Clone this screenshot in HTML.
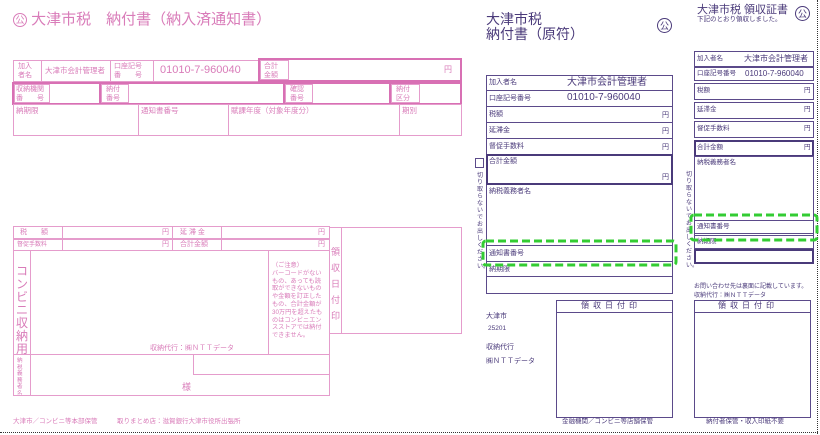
<!DOCTYPE html><html><head><meta charset="utf-8"><style>
*{margin:0;padding:0;box-sizing:border-box}
body{width:820px;height:435px;background:#fff;position:relative;overflow:hidden;font-family:"Liberation Sans","Noto Sans CJK JP",sans-serif}
.a{position:absolute}
.p{border:1px solid #e59ccc}
.pt{color:#d97cb9}
.P{border:2px solid #d870b4}
.u{border:1px solid #5b4a8a}
.U{border:2px solid #4a3a7a}
.ut{color:#4a3a7a}
.t{position:absolute;white-space:nowrap;line-height:1}
</style></head><body>
<div class="a" style="left:0;top:432px;width:818px;border-top:1px dotted #333"></div>
<div class="a" style="left:817px;top:0;height:434px;border-left:1px dotted #333"></div>

<!-- LEFT pink -->
<div class="t pt" style="left:13px;top:12px;font-size:15px"><span style="display:inline-block;width:14px;height:14px;border:1px solid #d97cb9;border-radius:50%;font-size:9px;text-align:center;line-height:13px;vertical-align:1px">公</span> 大津市税　納付書（納入済通知書）</div>
<div class="a p" style="left:13px;top:60px;width:246px;height:22px"></div>
<div class="a p" style="left:41px;top:60px;width:70px;height:22px"></div>
<div class="a p" style="left:110px;top:60px;width:44px;height:22px"></div>
<div class="t pt" style="left:18px;top:62px;font-size:7px;line-height:9px">加入<br>者名</div>
<div class="t pt" style="left:45px;top:67px;font-size:7.5px">大津市会計管理者</div>
<div class="t pt" style="left:114px;top:62px;font-size:7px;line-height:9px">口座記号<br>番　　号</div>
<div class="t pt" style="left:160px;top:65px;font-size:11px">01010-7-960040</div>
<div class="a P" style="left:258px;top:58px;width:204px;height:24px"></div>
<div class="a p" style="left:260px;top:60px;width:29px;height:20px"></div>
<div class="t pt" style="left:264px;top:62px;font-size:7px;line-height:9px">合計<br>金額</div>
<div class="t pt" style="left:444px;top:66px;font-size:8px">円</div>
<div class="a P" style="left:12px;top:82px;width:89px;height:23px"></div>
<div class="a p" style="left:14px;top:84px;width:36px;height:19px"></div>
<div class="t pt" style="left:16px;top:85px;font-size:7px;line-height:9px">収納機関<br>番　　号</div>
<div class="a P" style="left:99px;top:82px;width:186px;height:23px"></div>
<div class="a p" style="left:101px;top:84px;width:28px;height:19px"></div>
<div class="t pt" style="left:106px;top:85px;font-size:7px;line-height:9px">納付<br>番号</div>
<div class="a P" style="left:283px;top:82px;width:108px;height:23px"></div>
<div class="a p" style="left:285px;top:84px;width:28px;height:19px"></div>
<div class="t pt" style="left:290px;top:85px;font-size:7px;line-height:9px">確認<br>番号</div>
<div class="a P" style="left:389px;top:82px;width:73px;height:23px"></div>
<div class="a p" style="left:391px;top:84px;width:29px;height:19px"></div>
<div class="t pt" style="left:396px;top:85px;font-size:7px;line-height:9px">納付<br>区分</div>
<div class="a p" style="left:13px;top:104px;width:449px;height:32px"></div>
<div class="a p" style="left:138px;top:104px;width:91px;height:32px"></div>
<div class="a p" style="left:399px;top:104px;width:63px;height:32px"></div>
<div class="t pt" style="left:16px;top:107px;font-size:7.5px">納期限</div>
<div class="t pt" style="left:141px;top:107px;font-size:7.5px">通知書番号</div>
<div class="t pt" style="left:231px;top:107px;font-size:7.5px">賦課年度（対象年度分）</div>
<div class="t pt" style="left:402px;top:107px;font-size:7.5px">期別</div>

<div class="a p" style="left:13px;top:226px;width:317px;height:170px"></div>
<div class="a p" style="left:13px;top:226px;width:317px;height:13px"></div>
<div class="a p" style="left:13px;top:239px;width:317px;height:12px"></div>
<div class="a p" style="left:62px;top:226px;width:111px;height:25px"></div>
<div class="a p" style="left:221px;top:226px;width:109px;height:25px"></div>
<div class="t pt" style="left:20px;top:229px;font-size:7px">税　　額</div>
<div class="t pt" style="left:17px;top:242px;font-size:6px">督促手数料</div>
<div class="t pt" style="left:162px;top:229px;font-size:7px">円</div>
<div class="t pt" style="left:162px;top:241px;font-size:7px">円</div>
<div class="t pt" style="left:180px;top:229px;font-size:7px">延 滞 金</div>
<div class="t pt" style="left:180px;top:241px;font-size:7px">合計金額</div>
<div class="t pt" style="left:318px;top:229px;font-size:7px">円</div>
<div class="t pt" style="left:318px;top:241px;font-size:7px">円</div>
<div class="a p" style="left:13px;top:250px;width:18px;height:146px"></div>
<div class="t pt" style="left:16px;top:265px;font-size:12px;line-height:13px;white-space:normal;width:13px">コンビニ収納用</div>
<div class="t pt" style="left:17px;top:358px;font-size:5.5px;line-height:6.5px;white-space:normal;width:6px">納税義務者名</div>
<div class="a p" style="left:13px;top:354px;width:317px;height:42px"></div>
<div class="a p" style="left:268px;top:250px;width:62px;height:105px"></div>
<div class="t pt" style="left:272px;top:262px;font-size:6.2px;line-height:7.8px">（ご注意）<br>バーコードがない<br>もの、あっても読<br>取ができないもの<br>や金額を訂正した<br>もの、合計金額が<br>30万円を超えたも<br>のはコンビニエン<br>スストアでは納付<br>できません。</div>
<div class="t pt" style="left:150px;top:345px;font-size:7px">収納代行：㈱ＮＴＴデータ</div>
<div class="a p" style="left:193px;top:354px;width:137px;height:21px"></div>
<div class="t pt" style="left:182px;top:383px;font-size:9px">様</div>
<div class="a p" style="left:329px;top:227px;width:133px;height:107px"></div>
<div class="a p" style="left:341px;top:227px;width:121px;height:107px"></div>
<div class="t pt" style="left:331px;top:244px;font-size:9px;line-height:16px;white-space:normal;width:9px">領収日付印</div>
<div class="t pt" style="left:13px;top:419px;font-size:6.5px">大津市／コンビニ等本部保管　　　取りまとめ店：滋賀銀行大津市役所出張所</div>

<!-- MIDDLE purple -->
<div class="t ut" style="left:486px;top:12px;font-size:14px;line-height:15px">大津市税<br>納付書（原符）</div>
<div class="t ut" style="left:657px;top:18px;width:15px;height:15px;border:1px solid #4a3a7a;border-radius:50%;font-size:9px;text-align:center;line-height:14px">公</div>
<div class="a u" style="left:486px;top:75px;width:187px;height:219px"></div>
<div class="a u" style="left:486px;top:75px;width:187px;height:16px"></div>
<div class="a u" style="left:486px;top:90px;width:187px;height:17px"></div>
<div class="a u" style="left:486px;top:106px;width:187px;height:17px"></div>
<div class="a u" style="left:486px;top:122px;width:187px;height:17px"></div>
<div class="a u" style="left:486px;top:138px;width:187px;height:17px"></div>
<div class="a U" style="left:486px;top:154px;width:187px;height:31px"></div>
<div class="a u" style="left:486px;top:245px;width:187px;height:17px"></div>
<div class="a u" style="left:486px;top:276px;width:187px;height:18px"></div>
<div class="t ut" style="left:489px;top:79px;font-size:7px">加入者名</div>
<div class="t ut" style="left:567px;top:78px;font-size:10px">大津市会計管理者</div>
<div class="t ut" style="left:489px;top:95px;font-size:7px">口座記号番号</div>
<div class="t ut" style="left:567px;top:93px;font-size:10px">01010-7-960040</div>
<div class="t ut" style="left:489px;top:111px;font-size:7px">税額</div>
<div class="t ut" style="left:489px;top:127px;font-size:7px">延滞金</div>
<div class="t ut" style="left:489px;top:143px;font-size:7px">督促手数料</div>
<div class="t ut" style="left:489px;top:158px;font-size:7px">合計金額</div>
<div class="t ut" style="left:489px;top:188px;font-size:7px">納税義務者名</div>
<div class="t ut" style="left:489px;top:250px;font-size:7px">通知書番号</div>
<div class="t ut" style="left:489px;top:266px;font-size:7px">納期限</div>
<div class="t ut" style="left:662px;top:112px;font-size:7px">円</div>
<div class="t ut" style="left:662px;top:128px;font-size:7px">円</div>
<div class="t ut" style="left:662px;top:144px;font-size:7px">円</div>
<div class="t ut" style="left:662px;top:174px;font-size:7px">円</div>
<div class="a u" style="left:475px;top:158px;width:9px;height:10px"></div>
<div class="t ut" style="left:477px;top:173px;font-size:6px;line-height:7px;white-space:normal;width:6px">切り取らないでお出しください。</div>
<svg class="a" style="left:481px;top:239px" width="198" height="29"><rect x="2" y="2" width="193" height="24" rx="3" fill="none" stroke="#33cc33" stroke-width="3" stroke-dasharray="8,4"/></svg>
<div class="a u" style="left:556px;top:300px;width:117px;height:118px"></div>
<div class="a u" style="left:556px;top:300px;width:117px;height:13px"></div>
<div class="t ut" style="left:581px;top:302px;font-size:8px;letter-spacing:4px">領収日付印</div>
<div class="t ut" style="left:562px;top:419px;font-size:6.5px">金融機関／コンビニ等店舗保管</div>
<div class="t ut" style="left:486px;top:313px;font-size:7px">大津市</div>
<div class="t ut" style="left:488px;top:326px;font-size:6.5px">25201</div>
<div class="t ut" style="left:486px;top:344px;font-size:7px">収納代行</div>
<div class="t ut" style="left:486px;top:358px;font-size:7px">㈱ＮＴＴデータ</div>

<!-- RIGHT purple -->
<div class="t ut" style="left:697px;top:5px;font-size:11px">大津市税 領収証書</div>
<div class="t ut" style="left:697px;top:17px;font-size:6.5px">下記のとおり領収しました。</div>
<div class="t ut" style="left:795px;top:6px;width:15px;height:15px;border:1px solid #4a3a7a;border-radius:50%;font-size:9px;text-align:center;line-height:14px">公</div>
<div class="a u" style="left:694px;top:51px;width:120px;height:16px"></div>
<div class="a u" style="left:694px;top:67px;width:120px;height:14px"></div>
<div class="a u" style="left:694px;top:83px;width:120px;height:17px"></div>
<div class="a u" style="left:694px;top:102px;width:120px;height:17px"></div>
<div class="a u" style="left:694px;top:121px;width:120px;height:17px"></div>
<div class="a U" style="left:694px;top:140px;width:120px;height:17px"></div>
<div class="a u" style="left:694px;top:156px;width:120px;height:108px"></div>
<div class="a u" style="left:694px;top:220px;width:120px;height:14px"></div>
<div class="a u" style="left:694px;top:235px;width:120px;height:14px"></div>
<div class="a U" style="left:694px;top:249px;width:120px;height:15px"></div>
<div class="t ut" style="left:697px;top:56px;font-size:6.5px">加入者名</div>
<div class="t ut" style="left:744px;top:55px;font-size:8px">大津市会計管理者</div>
<div class="t ut" style="left:697px;top:71px;font-size:6.5px">口座記号番号</div>
<div class="t ut" style="left:745px;top:70px;font-size:8px">01010-7-960040</div>
<div class="t ut" style="left:697px;top:88px;font-size:6.5px">税額</div>
<div class="t ut" style="left:697px;top:107px;font-size:6.5px">延滞金</div>
<div class="t ut" style="left:697px;top:126px;font-size:6.5px">督促手数料</div>
<div class="t ut" style="left:697px;top:145px;font-size:6.5px">合計金額</div>
<div class="t ut" style="left:697px;top:160px;font-size:6.5px">納税義務者名</div>
<div class="t ut" style="left:697px;top:224px;font-size:6.5px">通知書番号</div>
<div class="t ut" style="left:697px;top:239px;font-size:6.5px">納期限</div>
<div class="t ut" style="left:804px;top:88px;font-size:6.5px">円</div>
<div class="t ut" style="left:804px;top:107px;font-size:6.5px">円</div>
<div class="t ut" style="left:804px;top:126px;font-size:6.5px">円</div>
<div class="t ut" style="left:804px;top:145px;font-size:6.5px">円</div>
<div class="t ut" style="left:686px;top:172px;font-size:6px;line-height:7px;white-space:normal;width:6px">切り取らないでお出しください。</div>
<svg class="a" style="left:689px;top:213px" width="131" height="30"><rect x="2" y="2" width="126" height="25" rx="3" fill="none" stroke="#33cc33" stroke-width="3" stroke-dasharray="8,4"/></svg>
<div class="t ut" style="left:694px;top:284px;font-size:6px">お問い合わせ先は裏面に記載しています。</div>
<div class="t ut" style="left:694px;top:293px;font-size:6px">収納代行：㈱ＮＴＴデータ</div>
<div class="a u" style="left:694px;top:300px;width:117px;height:118px"></div>
<div class="a u" style="left:694px;top:300px;width:117px;height:13px"></div>
<div class="t ut" style="left:718px;top:302px;font-size:8px;letter-spacing:4px">領収日付印</div>
<div class="t ut" style="left:706px;top:419px;font-size:6.5px">納付者保管・収入印紙不要</div>
</body></html>
